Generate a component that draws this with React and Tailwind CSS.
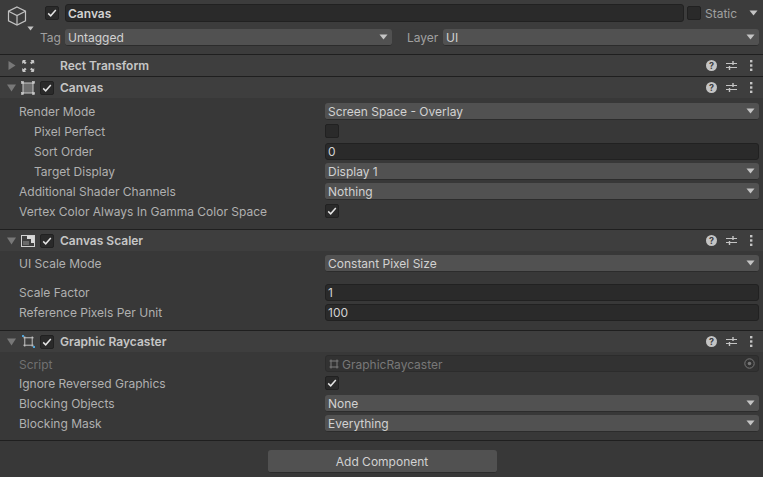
import React from 'react';

const Arrow = ({ className = 'w-[9px] h-[6px]' }) => (
  <svg viewBox="0 0 9 6" className={className}>
    <path d="M0.5 0.5H8.5L4.5 5.5Z" fill="#c4c4c4" />
  </svg>
);

const Check = () => (
  <svg viewBox="0 0 10 10" className="w-[10px] h-[10px]">
    <path d="M1.2 5.4L3.7 7.8L8.8 2" fill="none" stroke="#e4e4e4" strokeWidth="1.5" />
  </svg>
);

const Checkbox = ({ checked }) => (
  <div className="w-[14px] h-[14px] shrink-0 rounded-[2px] bg-[#2a2a2a] border border-[#212121] flex items-center justify-center">
    {checked && <Check />}
  </div>
);

const Dropdown = ({ value, className = 'flex-1' }) => (
  <div className={`${className} h-[17px] min-w-0 rounded-[3px] bg-[#515151] border-b border-[#2c2c2c] flex items-center justify-between pl-[3px] pr-[4px] text-[#d2d2d2]`}>
    <span className="pt-[2px] whitespace-nowrap">{value}</span>
    <Arrow />
  </div>
);

const Field = ({ value }) => (
  <div className="flex-1 h-[17px] rounded-[3px] bg-[#2a2a2a] border border-[#212121] flex items-center pl-[2px] text-[#d2d2d2]">
    <span className="pt-[2px]">{value}</span>
  </div>
);

const Row = ({ label, indent, disabled, className = 'h-[20px]', children }) => (
  <div className={`${className} flex items-center pr-[4px]`}>
    <div className={`${indent ? 'pl-[34px]' : 'pl-[19px]'} w-[325px] shrink-0 pt-[2px] ${disabled ? 'text-[#717171]' : 'text-[#b0b0b0]'}`}>
      {label}
    </div>
    {children}
  </div>
);

const RectIcon = () => (
  <svg viewBox="0 0 14 14" className="w-[14px] h-[14px]" fill="none" stroke="#c8c8c8">
    <rect x="2" y="2" width="10" height="10" fill="#6e6e6e" strokeWidth="1" />
    <rect x="0.5" y="0.5" width="2" height="2" fill="#c8c8c8" strokeWidth="0.6" />
    <rect x="11.5" y="0.5" width="2" height="2" fill="#c8c8c8" strokeWidth="0.6" />
    <rect x="0.5" y="11.5" width="2" height="2" fill="#c8c8c8" strokeWidth="0.6" />
    <rect x="11.5" y="11.5" width="2" height="2" fill="#c8c8c8" strokeWidth="0.6" />
  </svg>
);

const TransformIcon = () => (
  <svg viewBox="0 0 14 14" className="w-[14px] h-[14px]" fill="#c8c8c8">
    <path d="M2 1H5L4 2.2L5.6 3.8L4 5.2L2.4 3.7L1.2 5V2Z" />
    <path d="M12.6 1H9.6L10.6 2.2L9 3.8L10.6 5.2L12.2 3.7L13.2 5V2Z" />
    <path d="M2 13H5L4 11.8L5.6 10.2L4 8.8L2.4 10.3L1.2 9V12Z" />
    <path d="M12.6 13H9.6L10.6 11.8L9 10.2L10.6 8.8L12.2 10.3L13.2 9V12Z" />
  </svg>
);

const ScalerIcon = () => (
  <svg viewBox="0 0 14 12" className="w-[14px] h-[12px]">
    <rect x="0.5" y="0.5" width="13" height="11" fill="none" stroke="#d0d0d0" />
    <path d="M6 1H13V8H10V4H6Z" fill="#d8d8d8" />
    <rect x="2" y="6" width="6" height="4" fill="#6a6a6a" />
  </svg>
);

const RaycasterIcon = () => (
  <svg viewBox="0 0 14 14" className="w-[13px] h-[13px]" fill="none">
    <path d="M3 1.5V12.5M11 1.5V12.5M1.5 3H12.5M1.5 11H12.5" stroke="#cfcfcf" strokeWidth="1" />
    <rect x="0" y="0" width="2.2" height="2.2" fill="#4fa3d8" />
    <rect x="11.8" y="11.8" width="2.2" height="2.2" fill="#4fa3d8" />
  </svg>
);

const ScriptIcon = () => (
  <svg viewBox="0 0 10 10" className="w-[10px] h-[10px] shrink-0" fill="none">
    <path d="M2 0.5V9.5M8 0.5V9.5M0.5 2H9.5M0.5 8H9.5" stroke="#7c7c7c" strokeWidth="1" />
  </svg>
);

const HeaderActions = () => (
  <div className="ml-auto flex items-center pr-[10px]">
    <div className="w-[11px] h-[11px] rounded-full bg-[#c4c4c4] flex items-center justify-center text-[9px] leading-none font-bold text-[#3e3e3e]">?</div>
    <svg viewBox="0 0 11 9" className="ml-[9px] w-[11px] h-[9px]" fill="none" stroke="#c4c4c4">
      <path d="M0 2.5H11M0 6.5H11" />
      <path d="M7 0V4M3.5 5V9" strokeWidth="1.4" />
    </svg>
    <svg viewBox="0 0 3 11" className="w-[3px] h-[11px] ml-[13px]" fill="#c4c4c4">
      <rect y="0" width="2.4" height="2.4" />
      <rect y="4.3" width="2.4" height="2.4" />
      <rect y="8.6" width="2.4" height="2.4" />
    </svg>
  </div>
);

const ComponentHeader = ({ icon, title, open = true, hasToggle = true }) => (
  <div className="h-[21px] bg-[#3e3e3e] border-t border-[#1f1f1f] flex items-center box-content">
    <svg viewBox="0 0 9 9" className="w-[9px] h-[9px] ml-[7px] mr-[5px]">
      {open ? <path d="M0 1.5H9L4.5 8.5Z" fill="#787878" /> : <path d="M1.5 0V9L8.5 4.5Z" fill="#787878" />}
    </svg>
    <div className="w-[14px] flex justify-center">{icon}</div>
    {hasToggle ? (
      <div className="ml-[5px]"><Checkbox checked /></div>
    ) : (
      <div className="ml-[5px] w-[14px]" />
    )}
    <div className="ml-[6px] font-semibold text-[#c6c6c6]">{title}</div>
    <HeaderActions />
  </div>
);

export default function App() {
  return (
    <div
      className="w-[763px] h-[477px] overflow-hidden bg-[#383838] text-[12px] leading-[14px]"
      style={{ fontFamily: 'Inter, "Liberation Sans", sans-serif' }}
    >
      {/* GameObject header */}
      <div className="h-[54px] bg-[#3c3c3c] flex">
        <div className="w-[40px] shrink-0 pl-[7px] pt-[6px] relative">
          <svg viewBox="0 0 20 20" className="w-[20px] h-[20px]" fill="none" stroke="#c2c2c2" strokeWidth="1.2">
            <path d="M10 1L18.5 5.2V14.8L10 19L1.5 14.8V5.2Z" />
            <path d="M1.5 5.2L10 9.6L18.5 5.2M10 9.6V19" />
          </svg>
          <div className="absolute left-[27px] top-[26px]"><Arrow className="w-[7px] h-[5px]" /></div>
        </div>
        <div className="flex-1 pr-[4px]">
          <div className="h-[18px] mt-[4px] flex items-center">
            <div className="ml-[5px]"><Checkbox checked /></div>
            <div className="ml-[6px] w-[619px] h-[18px] rounded-[3px] bg-[#2a2a2a] border border-[#212121] flex items-center pl-[2px] font-semibold text-[#d2d2d2]">
              <span className="pt-[2px]">Canvas</span>
            </div>
            <div className="ml-[3px]"><Checkbox /></div>
            <div className="ml-[4px] pt-[2px] text-[#a0a0a0]">Static</div>
            <div className="ml-auto pr-[1px]"><Arrow /></div>
          </div>
          <div className="h-[17px] mt-[7px] flex items-center">
            <div className="w-[25px] text-[#a0a0a0]">Tag</div>
            <Dropdown value="Untagged" className="w-[327px]" />
            <div className="ml-[15px] w-[36px] text-[#a0a0a0]">Layer</div>
            <Dropdown value="UI" />
          </div>
        </div>
      </div>

      <ComponentHeader icon={<TransformIcon />} title="Rect Transform" open={false} hasToggle={false} />
      <ComponentHeader icon={<RectIcon />} title="Canvas" />
      <div className="pt-[3px] pb-[8px]">
        <Row label="Render Mode"><Dropdown value="Screen Space - Overlay" /></Row>
        <Row label="Pixel Perfect" indent><Checkbox /></Row>
        <Row label="Sort Order" indent><Field value="0" /></Row>
        <Row label="Target Display" indent><Dropdown value="Display 1" /></Row>
        <Row label="Additional Shader Channels"><Dropdown value="Nothing" /></Row>
        <Row label="Vertex Color Always In Gamma Color Space"><Checkbox checked /></Row>
      </div>

      <ComponentHeader icon={<ScalerIcon />} title="Canvas Scaler" />
      <div className="pt-[2px] pb-[8px]">
        <Row label="UI Scale Mode"><Dropdown value="Constant Pixel Size" /></Row>
        <div className="h-[9px]" />
        <Row label="Scale Factor"><Field value="1" /></Row>
        <Row label="Reference Pixels Per Unit"><Field value="100" /></Row>
      </div>

      <ComponentHeader icon={<RaycasterIcon />} title="Graphic Raycaster" />
      <div className="pt-[2px] pb-[7px]">
        <Row label="Script" disabled className="h-[19px]">
          <div className="flex-1 h-[17px] rounded-[3px] bg-[#323232] border border-[#2c2c2c] flex items-center pl-[3px] text-[#787878]">
            <ScriptIcon />
            <span className="ml-[3px] pt-[2px]">GraphicRaycaster</span>
            <svg viewBox="0 0 11 11" className="ml-auto mr-[3px] w-[11px] h-[11px]" fill="none">
              <circle cx="5.5" cy="5.5" r="4.7" stroke="#787878" />
              <circle cx="5.5" cy="5.5" r="1.8" fill="#787878" />
            </svg>
          </div>
        </Row>
        <Row label="Ignore Reversed Graphics"><Checkbox checked /></Row>
        <Row label="Blocking Objects"><Dropdown value="None" /></Row>
        <Row label="Blocking Mask"><Dropdown value="Everything" /></Row>
      </div>

      <div className="border-t border-[#1f1f1f] flex justify-center pt-[9px]">
        <button className="w-[229px] h-[23px] ml-[1px] pt-[2px] rounded-[3px] bg-[#515151] border-b border-[#2c2c2c] text-[#d2d2d2] text-[12px]">
          Add Component
        </button>
      </div>
    </div>
  );
}
